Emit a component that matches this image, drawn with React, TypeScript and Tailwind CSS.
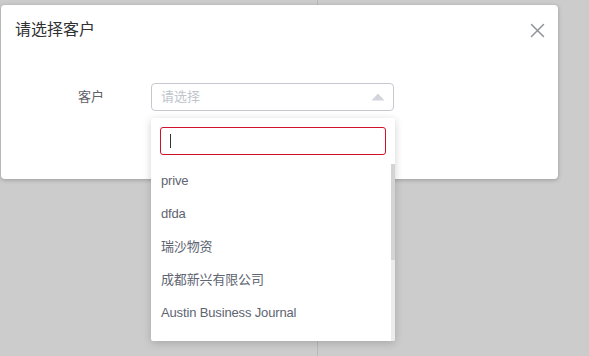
const options = ["prive", "dfda", "瑞沙物资", "成都新兴有限公司", "Austin Business Journal", "Waikato Times"];

export default function App() {
  return (
    <div
      className="relative h-[356px] w-[589px] overflow-hidden bg-[#cccccc]"
      style={{ fontFamily: '"Liberation Sans", "Noto Sans CJK SC", sans-serif' }}
    >
      <div className="h-full w-[318px] border-r border-[#b9b9b9]" />

      <div className="absolute left-[1px] top-[5px] h-[174px] w-[557px] rounded-[4px] bg-white shadow-[0_1px_4px_rgba(0,0,0,0.25)]">
        <div className="flex items-center justify-between pl-[14px] pr-[13px] pt-[15px]">
          <h2 className="text-[16px] leading-[20px] text-[#303133]">请选择客户</h2>
          <CloseIcon />
        </div>

        <div className="mt-[43px] flex items-center">
          <label className="w-[115px] pr-[12px] text-right text-[13px] text-[#606266]">客户</label>
          <div className="relative ml-[35px] w-[243px]">
            <div className="flex h-[28px] items-center justify-between rounded-[4px] border border-[#c7c9cf] pl-[9px] pr-[8px]">
              <span className="text-[13px] text-[#c0c4cc]">请选择</span>
              <svg width="14" height="8" viewBox="0 0 14 8">
                <path d="M7 0.5 L13.5 7.5 L0.5 7.5 Z" fill="#d2d5db" />
              </svg>
            </div>

            <div className="absolute left-0 top-[35px] z-10 h-[223px] w-[244px] overflow-hidden rounded-[2px] bg-white shadow-[0_2px_8px_rgba(0,0,0,0.18)]">
              <div className="px-[9px] pt-[9px]">
                <div className="flex h-[28px] items-center rounded-[3px] border border-[#d0112b] pl-[9px]">
                  <span className="h-[14px] w-px bg-[#333]" />
                </div>
              </div>
              <div className="relative mt-[9px]">
                <ul className="pr-[4px]">
                  {options.map((o) => (
                    <li key={o} className="flex h-[33px] items-center pl-[10px] text-[13px] tracking-[-0.15px] text-[#5e6471]">
                      {o}
                    </li>
                  ))}
                </ul>
                <div className="absolute right-0 top-0 h-[178px] w-[4px] bg-[#ececec]">
                  <div className="h-[96px] w-full bg-[#d4d4d4]" />
                </div>
              </div>
            </div>
          </div>
        </div>
      </div>
    </div>
  );
}

function CloseIcon() {
  return (
    <svg width="15" height="15" viewBox="0 0 15 15" className="mt-[1px]">
      <path d="M1.5 1.5 L13.5 13.5 M13.5 1.5 L1.5 13.5" stroke="#909399" strokeWidth="1.5" strokeLinecap="round" />
    </svg>
  );
}
